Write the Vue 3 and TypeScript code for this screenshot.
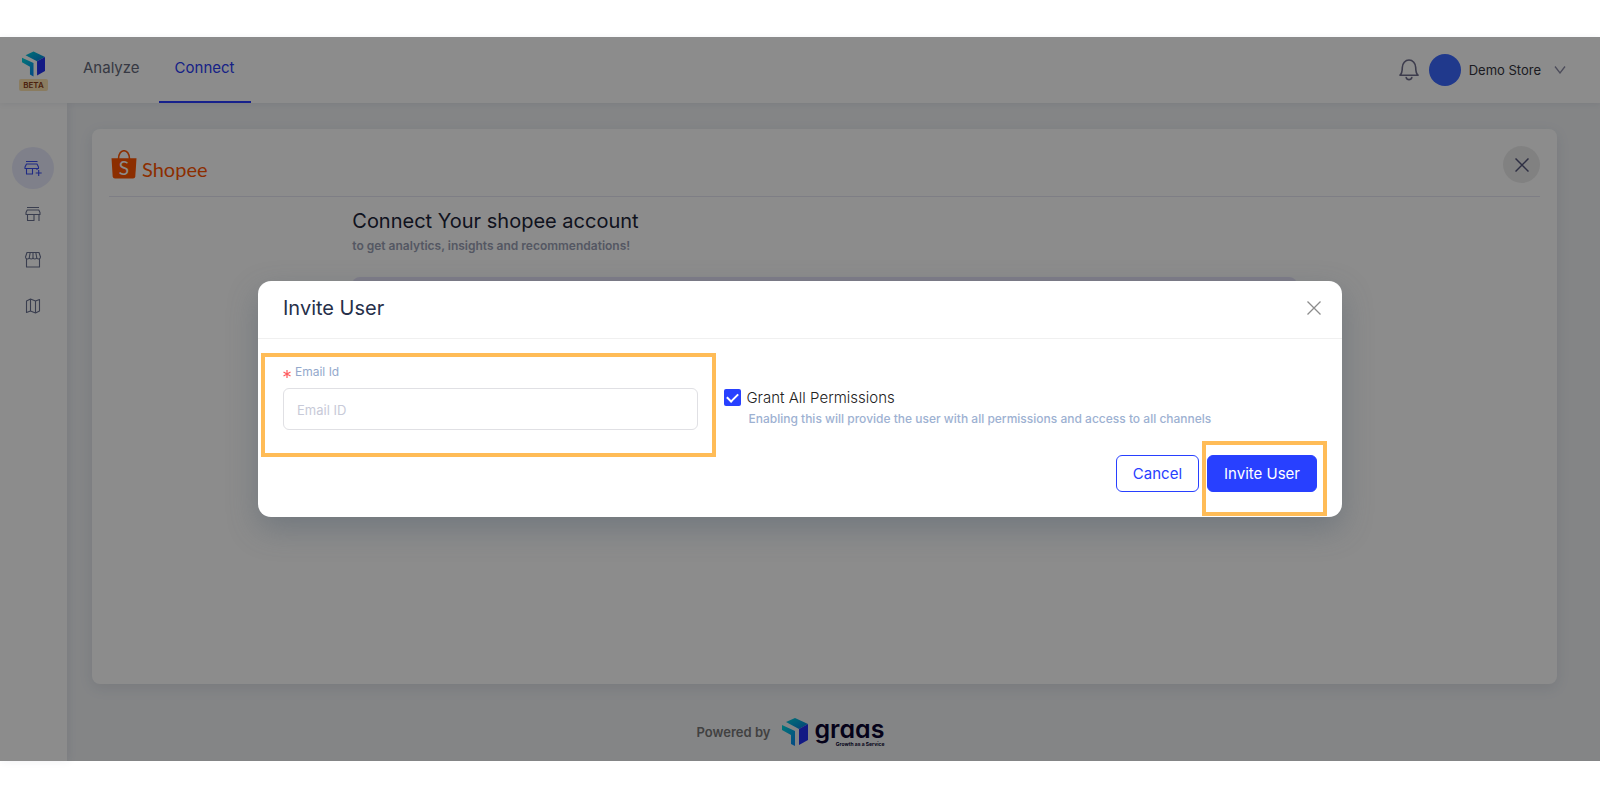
<script setup lang="ts">
import { ref } from 'vue'

const email = ref('')
const grantAll = ref(true)
const tabs = [
  { label: 'Analyze', active: false },
  { label: 'Connect', active: true },
]
const sideItems = ['add-store', 'store', 'market', 'map']
</script>

<template>
  <div class="page">
    <div class="shell">
      <header class="topbar">
        <a href="#" class="brand" aria-label="Home">
          <svg class="brand-mark" viewBox="0 0 26 28">
            <defs>
              <linearGradient id="topA" x1="0" y1="0" x2="1" y2="1"><stop offset="0" stop-color="#00d0dc" /><stop offset="1" stop-color="#0a78d8" /></linearGradient>
              <linearGradient id="leftA" x1="0" y1="0" x2="1" y2="1"><stop offset="0" stop-color="#00d8dc" /><stop offset="1" stop-color="#0a86f0" /></linearGradient>
            </defs>
            <path d="M4 4 13 0 26 6 17 11Z" fill="url(#topA)" />
            <path d="M26 6V22L17 27V11Z" fill="#2430f0" />
            <path d="M0 7 13 13V28L9 26V17L0 12Z" fill="url(#leftA)" />
          </svg>
          <span class="beta">BETA</span>
        </a>
        <nav class="tabs">
          <a v-for="t in tabs" :key="t.label" href="#" class="tab" :class="{ active: t.active }">{{ t.label }}</a>
        </nav>
        <div class="account">
          <button class="plain" aria-label="Notifications">
            <svg class="bell" viewBox="0 0 20 24" fill="none" stroke="#6f6e8c" stroke-width="1.6" stroke-linejoin="round">
              <path d="M1 17.2C3 15.5 3.3 13 3.3 9.5A6.7 7.5 0 0 1 16.7 9.5C16.7 13 17 15.5 19 17.2Z" />
              <path d="M7.2 19.5A2.9 2.9 0 0 0 12.8 19.5" stroke-linecap="round" />
            </svg>
          </button>
          <span class="avatar"></span>
          <button class="plain store">Demo Store
            <svg class="chev" viewBox="0 0 12 8" fill="none" stroke="#8c8ca6" stroke-width="1.3"><path d="M1 0.5 6 7 11 0.5" /></svg>
          </button>
        </div>
      </header>

      <div class="body">
        <aside class="sidebar">
          <a v-for="(s, i) in sideItems" :key="s" href="#" class="side" :class="{ active: i === 0 }" :aria-label="s">
            <svg class="side-icon" viewBox="0 0 18 18" fill="none" stroke="currentColor" stroke-width="1.1" stroke-linejoin="round">
              <g v-if="s === 'add-store'">
                <path d="M2 2.500H13.500M2.500 5H13L14.500 8V9.500H1V8ZM2.500 9.500V15H8.500V9.500M13 9.500V11M14.700 11V17M11.700 14H17.700" />
              </g>
              <g v-else-if="s === 'store'">
                <path d="M3 2.500H15M3.200 5H14.800L16 7.500V9.500H2V7.500ZM3.500 9.500V15.500H10V9.500M15 9.500V16" />
              </g>
              <g v-else-if="s === 'market'">
                <path d="M3 1.500H15L16.500 6C16.500 8.500 13 8.500 12.700 6.500C12.500 8.500 9 8.500 9 6.500C9 8.500 5.500 8.500 5.300 6.500C5 8.500 1.500 8.500 1.500 6ZM5.300 6.500 6.200 1.500M9 6.500V1.500M12.700 6.500 11.800 1.500M2.500 8V16H15.500V8" />
              </g>
              <g v-else>
                <path d="M2.500 4 6.500 2 11.500 4 15.500 2.500V14L11.500 16 6.500 14 2.500 15.500ZM6.500 2V14M11.500 4V16" />
              </g>
            </svg>
          </a>
        </aside>

        <main class="main">
          <section class="card">
            <div class="card-head">
              <div class="shopee">
                <svg class="bag" viewBox="0 0 26 29">
                  <path d="M7.5 9C7.5 -2 18.5 -2 18.5 9" fill="none" stroke="#ff5500" stroke-width="1.6" />
                  <path d="M0.5 8.2H25.5L24.3 26.5Q24.1 28.5 22 28.5H4Q1.9 28.5 1.7 26.5Z" fill="#ff5500" />
                  <text x="13" y="25" text-anchor="middle" font-family="Lato, sans-serif" font-size="19" fill="#fff">S</text>
                </svg>
                <span class="shopee-name">Shopee</span>
              </div>
              <button class="round-close" aria-label="Close channel">
                <svg class="x-icon" viewBox="0 0 14 14" fill="none" stroke="#55577a" stroke-width="1.5"><path d="M0.5 0.5 13.5 13.5M13.5 0.5 0.5 13.5" /></svg>
              </button>
            </div>
            <div class="connect">
              <h1>Connect Your shopee account</h1>
              <p>to get analytics, insights and recommendations!</p>
              <div class="panel"></div>
            </div>
          </section>
          <footer class="footer">
            <span class="powered">Powered by</span>
            <svg class="foot-mark" viewBox="0 0 26 28">
              <path d="M4 4 13 0 26 6 17 11Z" fill="url(#topA)" />
              <path d="M26 6V22L17 27V11Z" fill="#2430f0" />
              <path d="M0 7 13 13V28L9 26V17L0 12Z" fill="url(#leftA)" />
            </svg>
            <span class="graas"><span class="graas-name">graas</span><span class="graas-tag">Growth as a Service</span></span>
          </footer>
        </main>
      </div>

      <div class="overlay">
        <form class="modal" role="dialog" aria-labelledby="dlg-title" @submit.prevent>
          <div class="modal-head">
            <h2 id="dlg-title">Invite User</h2>
            <button type="button" class="plain" aria-label="Close">
              <svg class="x-icon" viewBox="0 0 14 14" fill="none" stroke="#8c8c8c" stroke-width="1.3"><path d="M0.5 0.5 13.5 13.5M13.5 0.5 0.5 13.5" /></svg>
            </button>
          </div>
          <div class="modal-body">
            <div class="field">
              <label for="email"><svg class="star" viewBox="0 0 8 8" stroke="#ff5b5e" stroke-width="1.2"><path d="M4 0V8M0.5 2 7.5 6M7.5 2 0.5 6" /></svg>Email Id</label>
              <input id="email" v-model="email" type="email" placeholder="Email ID" />
              <span class="mark mark-field"></span>
            </div>
            <div class="grant">
              <input id="grant" v-model="grantAll" type="checkbox" />
              <div>
                <label for="grant">Grant All Permissions</label>
                <p>Enabling this will provide the user with all permissions and access to all channels</p>
              </div>
            </div>
          </div>
          <div class="actions">
            <button type="button" class="btn">Cancel</button>
            <div class="primary-wrap">
              <button type="submit" class="btn primary">Invite User</button>
              <span class="mark mark-button"></span>
            </div>
          </div>
        </form>
      </div>
    </div>
  </div>
</template>

<style>
body {
  margin: 0;
  background: #fff;
}
</style>

<style scoped>
* {
  box-sizing: border-box;
}
.page {
  min-height: 100vh;
  padding: 37px 0 39px;
  display: flex;
  flex-direction: column;
  font-family: Inter, "Liberation Sans", sans-serif;
  color: #1c2438;
}
.shell {
  position: relative;
  flex: 1;
  display: flex;
  flex-direction: column;
  background: #f0f2f5;
}
h1, h2, p {
  margin: 0;
  font-weight: 400;
}
a {
  text-decoration: none;
}
button, input {
  font-family: inherit;
}
svg {
  display: block;
}
.plain {
  border: 0;
  padding: 0;
  background: none;
}
.topbar {
  height: 66px;
  display: flex;
  background: #fff;
  padding-right: 34px;
  box-shadow: 0 1px 6px rgba(40, 50, 90, 0.08);
  z-index: 1;
}
.brand {
  width: 67px;
  display: flex;
  flex-direction: column;
  align-items: center;
  padding-top: 14px;
}
.brand-mark {
  width: 23px;
  height: 26px;
}
.beta {
  margin-top: 2px;
  padding: 0 4px;
  border-radius: 2px;
  background: #fbe2b0;
  color: #8a3d1a;
  font-size: 8px;
  line-height: 12px;
  font-weight: 600;
}
.tabs {
  display: flex;
}
.tab {
  padding: 0 16px;
  font-size: 15px;
  line-height: 62px;
  color: #64697a;
}
.tab + .tab {
  margin-left: 3px;
}
.tab.active {
  color: #2a3cf5;
  border-bottom: 2px solid #2a3cff;
}
.account {
  margin-left: auto;
  display: flex;
  align-items: center;
}
.bell {
  width: 20px;
  height: 24px;
}
.avatar {
  width: 32px;
  height: 32px;
  margin: 0 8px 0 10px;
  border-radius: 50%;
  background: #3b68ff;
}
.store {
  display: flex;
  align-items: center;
  font-size: 13px;
  color: #33343c;
}
.chev {
  width: 12px;
  height: 8px;
  margin-left: 13px;
}
.body {
  flex: 1;
  display: flex;
}
.sidebar {
  width: 67px;
  background: #fff;
  padding: 44px 1px 0 0;
  display: flex;
  flex-direction: column;
  align-items: center;
  gap: 4px;
  box-shadow: 2px 0 8px rgba(40, 50, 90, 0.08);
}
.side {
  width: 42px;
  height: 42px;
  border-radius: 50%;
  display: grid;
  place-items: center;
  color: #6a7290;
}
.side.active {
  background: #e8eafc;
  color: #3a4df0;
}
.side-icon {
  width: 18px;
  height: 18px;
}
.main {
  flex: 1;
  padding: 26px 43px 0 25px;
  display: flex;
  flex-direction: column;
}
.card {
  flex: 1;
  padding: 0 17px;
  border-radius: 8px;
  background: #fff;
  box-shadow: 0 4px 14px rgba(40, 60, 90, 0.1);
}
.card-head {
  height: 68px;
  padding-top: 4px;
  display: flex;
  justify-content: space-between;
  align-items: center;
  border-bottom: 1px solid #e6e6f2;
}
.shopee {
  display: flex;
  align-items: center;
  gap: 5px;
  padding-left: 2px;
}
.bag {
  width: 26px;
  height: 29px;
}
.shopee-name {
  font-family: Lato, sans-serif;
  font-size: 20px;
  line-height: 24px;
  color: #ff5500;
  padding-top: 9px;
}
.round-close {
  width: 37px;
  height: 37px;
  padding: 0;
  border: 0;
  border-radius: 50%;
  background: #ececec;
  display: grid;
  place-items: center;
}
.x-icon {
  width: 14px;
  height: 14px;
}
.connect {
  width: 66%;
  margin: 12px auto 0;
}
h1 {
  font-size: 20px;
  line-height: 24px;
}
.connect p {
  margin-top: 5px;
  font-size: 12px;
  line-height: 16px;
  font-weight: 600;
  color: #9a9fb4;
}
.panel {
  height: 160px;
  margin-top: 23px;
  border-radius: 8px;
  background: #e5e2f8;
}
.footer {
  height: 77px;
  padding: 18px 68px 0 0;
  display: flex;
  align-items: center;
  justify-content: center;
}
.powered {
  font-size: 13px;
  font-weight: 600;
  color: #777;
}
.foot-mark {
  width: 26px;
  height: 28px;
  margin: 0 6px 0 12px;
}
.graas {
  display: flex;
  flex-direction: column;
  align-items: flex-end;
  color: #0a0530;
}
.graas-name {
  font-size: 25px;
  line-height: 24px;
  font-weight: 600;
  font-feature-settings: "cv11";
}
.graas-tag {
  font-size: 5px;
  line-height: 6px;
  font-weight: 700;
}
.overlay {
  position: absolute;
  inset: 0;
  z-index: 2;
  padding-top: 244px;
  background: rgba(0, 0, 0, 0.45);
}
.modal {
  width: min(1084px, 92%);
  margin: 0 auto;
  padding-bottom: 25px;
  border-radius: 13px;
  background: #fff;
  box-shadow: 0 12px 30px rgba(75, 90, 105, 0.4);
}
.modal-head {
  height: 58px;
  padding: 0 21px 3px 25px;
  display: flex;
  align-items: center;
  justify-content: space-between;
  border-bottom: 1px solid #f0f0f0;
}
h2 {
  font-size: 20px;
  line-height: 24px;
  color: #26304a;
}
.modal-body {
  padding: 25px 25px 0;
  display: grid;
  grid-template-columns: 7fr 10fr;
  gap: 25px;
}
.field {
  position: relative;
}
.field label {
  display: flex;
  align-items: center;
  font-size: 12px;
  line-height: 16px;
  color: #94a9cc;
}
.star {
  width: 8px;
  height: 8px;
  margin: 3px 4px 0 0;
}
.field input {
  display: block;
  width: 100%;
  height: 42px;
  margin-top: 8px;
  padding: 2px 13px 0;
  border: 1px solid #e0e0e4;
  border-radius: 6px;
  font-size: 13px;
}
.field input::placeholder {
  color: #c8cad8;
  opacity: 1;
}
.mark {
  position: absolute;
  border: 4px solid #ffbc57;
  pointer-events: none;
}
.mark-field {
  inset: -11px -18px -27px -22px;
}
.mark-button {
  inset: -14px -10px -24px -5px;
}
.grant {
  display: flex;
  gap: 5px;
  padding: 23px 0 0 1px;
}
.grant input {
  appearance: none;
  width: 17px;
  height: 17px;
  margin: 2px 0 0;
  border-radius: 2px;
  background: #2840ff;
  display: grid;
  place-items: center;
}
.grant input:checked::before {
  content: "";
  width: 9px;
  height: 5px;
  margin-top: -3px;
  border: solid #fff;
  border-width: 0 0 2px 2px;
  transform: rotate(-45deg);
}
.grant label {
  display: block;
  font-size: 15px;
  line-height: 22px;
  font-weight: 300;
  color: #222;
}
.grant p {
  padding-left: 2px;
  font-size: 12px;
  line-height: 20px;
  font-weight: 500;
  color: #9db1d2;
}
.actions {
  padding: 25px 25px 0;
  display: flex;
  justify-content: flex-end;
  gap: 8px;
}
.primary-wrap {
  position: relative;
}
.btn {
  height: 37px;
  padding: 0 16px;
  border: 1px solid #2840ff;
  border-radius: 6px;
  background: #fff;
  color: #2840ff;
  font-size: 15px;
}
.btn.primary {
  background: #2840ff;
  color: #fff;
}
</style>
